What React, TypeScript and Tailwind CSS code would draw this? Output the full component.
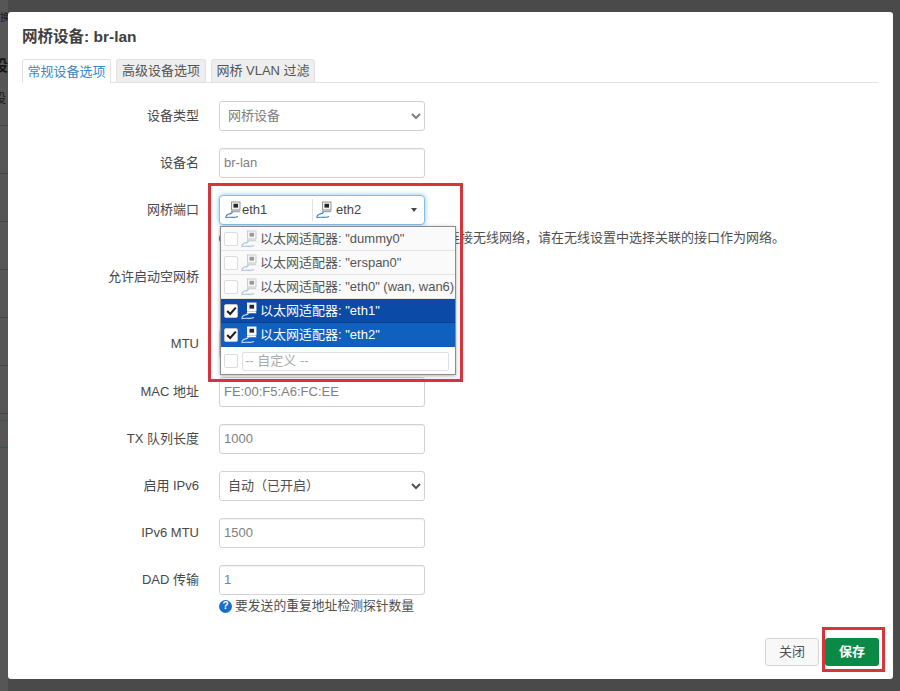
const FONT = '"Liberation Sans", "Noto Sans CJK SC", sans-serif'

function NetIcon({ dim, light }: { dim?: boolean; light?: boolean }) {
  const wire = light ? '#cfe0f5' : '#3f7fc0'
  return (
    <svg width="16" height="18" viewBox="0 0 16 18" className={dim ? 'flex-none opacity-45' : 'flex-none'}>
      <rect x="6.5" y="1" width="8.5" height="8" fill="#f2f2f2" stroke={light ? '#ffffff' : '#8c8c8c'} strokeWidth="0.9" />
      <rect x="8.5" y="2.8" width="4.5" height="3.8" fill="#262626" />
      <path d="M5.5 11.2 L15.5 11.2 L14.5 9.6 L6.5 9.6 Z" fill={light ? '#ffffff' : '#a8a8a8'} />
      <path d="M7.5 11 C6.8 13.4 4.6 12.6 3.2 13.2 C1.6 13.9 1 15 0.8 16.2" fill="none" stroke={wire} strokeWidth="1.1" />
      <path d="M0.5 16.8 C4 15.2 8 17.6 13 15.4" fill="none" stroke={wire} strokeWidth="1.1" />
    </svg>
  )
}

function Box({ checked, dim }: { checked?: boolean; dim?: boolean }) {
  return (
    <span className={['flex h-[14px] w-[14px] flex-none items-center justify-center rounded-[2px] border bg-white', dim ? 'border-[#dcdcdc]' : 'border-[#c4c4c4]'].join(' ')}>
      {checked && (
        <svg width="11" height="10" viewBox="0 0 11 10">
          <path d="M1.2 5 L4.2 8 L9.8 1.6" fill="none" stroke="#1a1a1a" strokeWidth="2" />
        </svg>
      )}
    </span>
  )
}

function Row({ label, h = 'h-[30px]', children }: { label: string; h?: string; children: React.ReactNode }) {
  return (
    <div className={['mb-[17px] flex', h].join(' ')}>
      <div className="flex h-[30px] w-[183px] flex-none items-center justify-end text-[13px] text-[#484848]">{label}</div>
      <div className="ml-[20px] w-[206px] flex-none">{children}</div>
    </div>
  )
}

function Field({ value }: { value: string }) {
  return (
    <input
      readOnly
      value={value}
      className="block h-[30px] w-full rounded-[3px] border border-[#d2d2d2] bg-white px-[4px] pb-[2px] text-[13px] text-[#808080] shadow-[inset_0_1px_1px_rgba(0,0,0,.06)] outline-none"
    />
  )
}

function Pick({ value, color }: { value: string; color: string }) {
  return (
    <select
      defaultValue={value}
      style={{ appearance: 'auto' }}
      className={['block h-[30px] w-full rounded-[3px] border border-[#d2d2d2] bg-white pb-[2px] pl-[4px] text-[13px] outline-none', color].join(' ')}
    >
      <option>{value}</option>
    </select>
  )
}

function Help() {
  return (
    <span className="flex h-[13px] w-[13px] flex-none items-center justify-center rounded-full bg-[#1b6fc8] text-[10px] leading-none font-bold text-white">?</span>
  )
}

function PortRow({ name, checked, tone, dim }: { name: string; checked?: boolean; tone?: string; dim?: boolean }) {
  return (
    <div className={['flex h-[24px] items-center gap-[3px] border-b pl-[3px] text-[13px] whitespace-nowrap', tone ?? 'border-[#e4e4e4] bg-[#fafafa] text-[#555]'].join(' ')}>
      <Box checked={checked} dim={dim} />
      <NetIcon dim={dim} light={checked} />
      <span>{name}</span>
    </div>
  )
}

export default function App() {
  return (
    <div className="relative h-[691px] w-[900px] overflow-hidden bg-[#4a4a4a]" style={{ fontFamily: FONT }}>
      {/* page behind the dialog */}
      <div className="h-[691px] w-[8px] overflow-hidden bg-[#565656] text-[#161616]">
        <div className="h-[56px] pt-[10px] text-[10px] whitespace-nowrap">换</div>
        <div className="-ml-[7px] h-[34px] text-[15px] leading-[20px] font-bold">设</div>
        <div className="-ml-[6px] h-[35px] text-[12px]">设</div>
        <div className="h-[48px] border-t border-[#444] text-[10px]">&nbsp;</div>
        <div className="h-[48px] border-t border-[#444] text-[10px]">&nbsp;</div>
        <div className="h-[48px] border-t border-[#444] text-[10px]">&nbsp;</div>
        <div className="h-[48px] border-t border-[#444] text-[10px]">&nbsp;</div>
        <div className="h-[48px] border-t border-[#444] text-[10px]">&nbsp;</div>
        <div className="h-[48px] border-t border-[#444] text-[10px]">&nbsp;</div>
        <div className="h-[7px] border-t border-[#444]" />
        <div className="h-[27px] border-t border-[#2f5a4a]" />
        <div className="h-[48px] border-t border-[#2f5a4a]" />
      </div>

      {/* dialog */}
      <div className="absolute top-[12px] left-[8px] flex h-[667px] w-[885px] flex-col rounded-[3px] bg-white px-[14px]">
        <div className="pt-[16px] text-[15.5px] leading-[18px] font-bold text-[#404040]">网桥设备: br-lan</div>
        <div className="mt-[13px] flex h-[24px] gap-[5px] border-b border-[#e2e2e2] text-[13px]">
          <div className="flex h-[24px] w-[89px] items-center justify-center rounded-t-[3px] border border-b-0 border-[#e2e2e2] bg-white text-[#3a88c4]">常规设备选项</div>
          <div className="flex h-[23px] w-[90px] items-center justify-center rounded-t-[3px] border border-b-0 border-[#e2e2e2] bg-[#eeeeee] text-[#555]">高级设备选项</div>
          <div className="flex h-[23px] w-[104px] items-center justify-center rounded-t-[3px] border border-b-0 border-[#e2e2e2] bg-[#eeeeee] text-[#555]">网桥 VLAN 过滤</div>
        </div>

        <div className="mt-[18px] -ml-[6px]">
          <Row label="设备类型"><Pick value="网桥设备" color="text-[#808080]" /></Row>
          <Row label="设备名"><Field value="br-lan" /></Row>
          <Row label="网桥端口" h="h-[50px]">
            <div className="flex h-[30px] items-center rounded-[4px] border border-[#84bdea] bg-white text-[13px] text-[#444] shadow-[0_0_5px_rgba(90,165,230,.7)]">
              <div className="flex h-[22px] w-[93px] items-center gap-[1px] border-r border-[#e2e2e2] pl-[5px]"><NetIcon /><span>eth1</span></div>
              <div className="flex h-[22px] flex-1 items-center gap-[2px] pl-[3px]"><NetIcon /><span className="ml-[2px]">eth2</span></div>
              <span className="mr-[7px] h-0 w-0 border-x-[3px] border-t-[4px] border-x-transparent border-t-[#444]" />
            </div>
            <div className="mt-[6px] flex w-[600px] items-center gap-[7px] leading-[14px] whitespace-nowrap text-[#505050]">
              <Help />
              <span className="text-[13px]">选择要附加到此网桥的网络接口。要连接无线网络，请在无线设置中选择关联的接口作为网络。</span>
            </div>
          </Row>
          <Row label="允许启动空网桥" h="h-[50px]"><div className="ml-[6px]"><Box /></div></Row>
          <Row label="MTU" h="h-[31px]"><Field value="1500" /></Row>
          <Row label="MAC 地址"><Field value="FE:00:F5:A6:FC:EE" /></Row>
          <Row label="TX 队列长度"><Field value="1000" /></Row>
          <Row label="启用 IPv6"><Pick value="自动（已开启）" color="text-[#505050]" /></Row>
          <Row label="IPv6 MTU"><Field value="1500" /></Row>
          <Row label="DAD 传输">
            <Field value="1" />
            <div className="mt-[3px] flex items-center gap-[3px] text-[12.8px] leading-[16px] whitespace-nowrap text-[#505050]">
              <Help />
              <span>要发送的重复地址检测探针数量</span>
            </div>
          </Row>
        </div>

        <div className="mt-auto mb-[13px] flex justify-end gap-[6px]">
          <button className="h-[28px] w-[54px] rounded-[3px] border border-[#d4d4d4] bg-[#f8f8f8] text-[13px] text-[#505050]">关闭</button>
          <button className="h-[28px] w-[54px] rounded-[3px] bg-[#0b8a47] text-[13px] font-bold text-white">保存</button>
        </div>
      </div>

      {/* open port dropdown */}
      <div className="absolute top-[226px] left-[220px] h-[149px] w-[236px] overflow-hidden border border-[#8c8c8c] bg-white shadow-[0_1px_4px_rgba(0,0,0,.3)]">
        <PortRow name={'以太网适配器: "dummy0"'} dim />
        <PortRow name={'以太网适配器: "erspan0"'} dim />
        <PortRow name={'以太网适配器: "eth0" (wan, wan6)'} dim />
        <PortRow name={'以太网适配器: "eth1"'} checked tone="border-[#0a3f8c] bg-[#0b4aa6] text-white" />
        <PortRow name={'以太网适配器: "eth2"'} checked tone="border-[#1159b3] bg-[#1060c0] text-white" />
        <div className="flex h-[28px] items-center gap-[4px] pl-[3px]">
          <Box dim />
          <div className="flex h-[19px] w-[207px] items-center rounded-[2px] border border-[#e0e0e0] px-[2px] text-[13px] text-[#aaaaaa]">-- 自定义 --</div>
        </div>
      </div>

      {/* red markers */}
      <div className="pointer-events-none absolute top-[183px] left-[208px] h-[199px] w-[255px] border-[3px] border-[#d8343c]" />
      <div className="pointer-events-none absolute top-[627px] left-[822px] h-[45px] w-[63px] border-[3px] border-[#d8343c]" />
    </div>
  )
}
